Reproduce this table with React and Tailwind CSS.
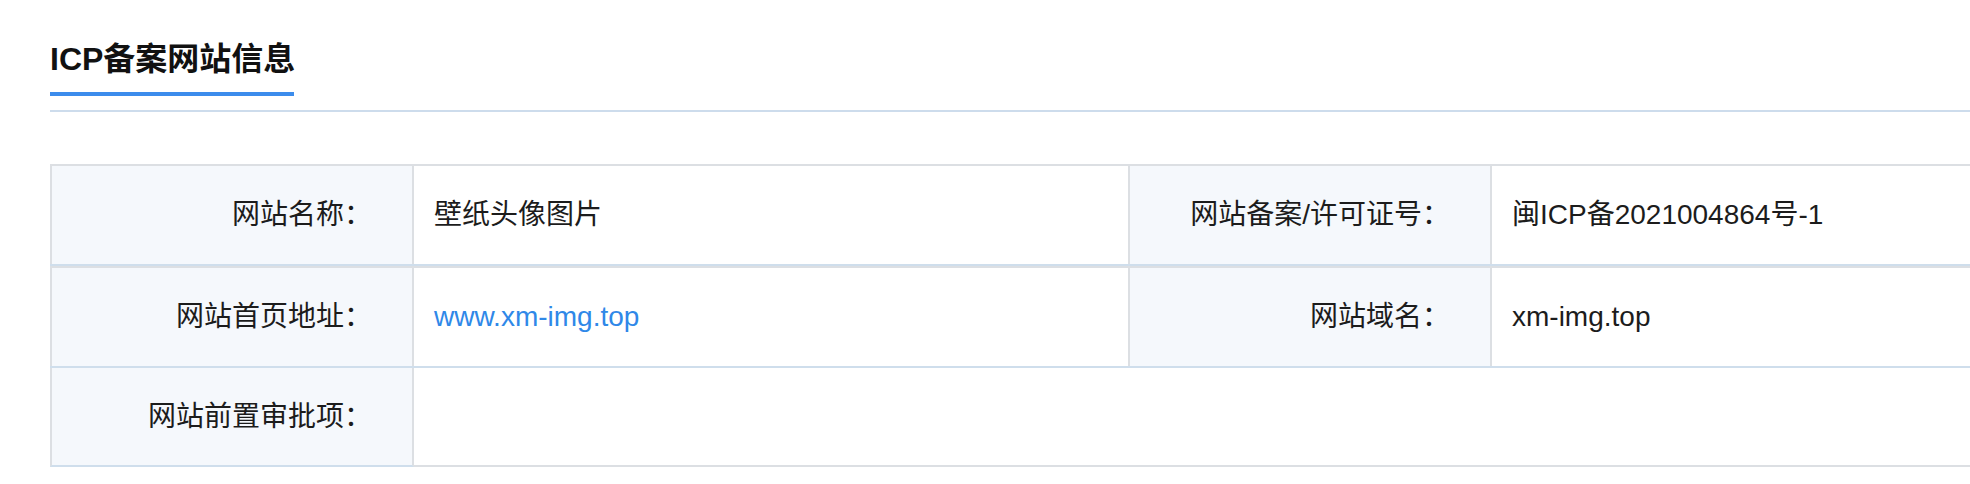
import React from "react";

const FONT = "font-['Liberation_Sans','Noto_Sans_CJK_SC',sans-serif]";

function Item({ label, children }) {
  return (
    <div className="flex w-[1078px] shrink-0 border-l-2 border-[#dcdfe3]">
      <div className="flex w-[362px] shrink-0 items-center justify-end border-r-2 border-[#dcdfe3] bg-[#f5f8fc] pr-[40px] text-[28px] leading-[28px] text-[#1c1c1c]">
        {label}
      </div>
      <div className="flex flex-1 items-center pl-[20px] text-[28px] leading-[28px] text-[#1c1c1c]">
        {children}
      </div>
    </div>
  );
}

export default function App() {
  return (
    <div className={`w-full h-[484px] overflow-hidden bg-white ${FONT}`}>
      <div className="pl-[50px] pt-[43px]">
        <div className="text-[32px] leading-[32px] font-bold text-[#111]">ICP备案网站信息</div>
        <div className="mt-[17px] h-[4px] w-[244px] bg-[#3c8cec]" />
      </div>
      <div className="ml-[50px] mt-[14px] h-[2px] bg-[#cddcec]" />
      <div className="mt-[52px] pl-[50px]">
        <div className="w-[2156px]">
          <div className="flex h-[102px] border-t-2 border-b-2 border-t-[#dcdfe3] border-b-[#cfdeec]">
            <Item label="网站名称：">壁纸头像图片</Item>
            <Item label="网站备案/许可证号：">闽ICP备2021004864号-1</Item>
          </div>
          <div className="flex h-[102px] border-t-2 border-b-2 border-t-[#dcdfe3] border-b-[#cfdeec]">
            <Item label="网站首页地址：">
              <a className="text-[#2f88e8]">www.xm-img.top</a>
            </Item>
            <Item label="网站域名：">xm-img.top</Item>
          </div>
          <div className="flex h-[99px]">
            <div className="flex w-[364px] shrink-0 items-center justify-end border-l-2 border-r-2 border-b-2 border-l-[#dcdfe3] border-r-[#dcdfe3] border-b-[#cfdeec] bg-[#f5f8fc] pr-[40px] text-[28px] leading-[28px] text-[#1c1c1c]">
              网站前置审批项：
            </div>
            <div className="flex-1 border-b-2 border-[#dcdfe3]" />
          </div>
        </div>
      </div>
    </div>
  );
}
